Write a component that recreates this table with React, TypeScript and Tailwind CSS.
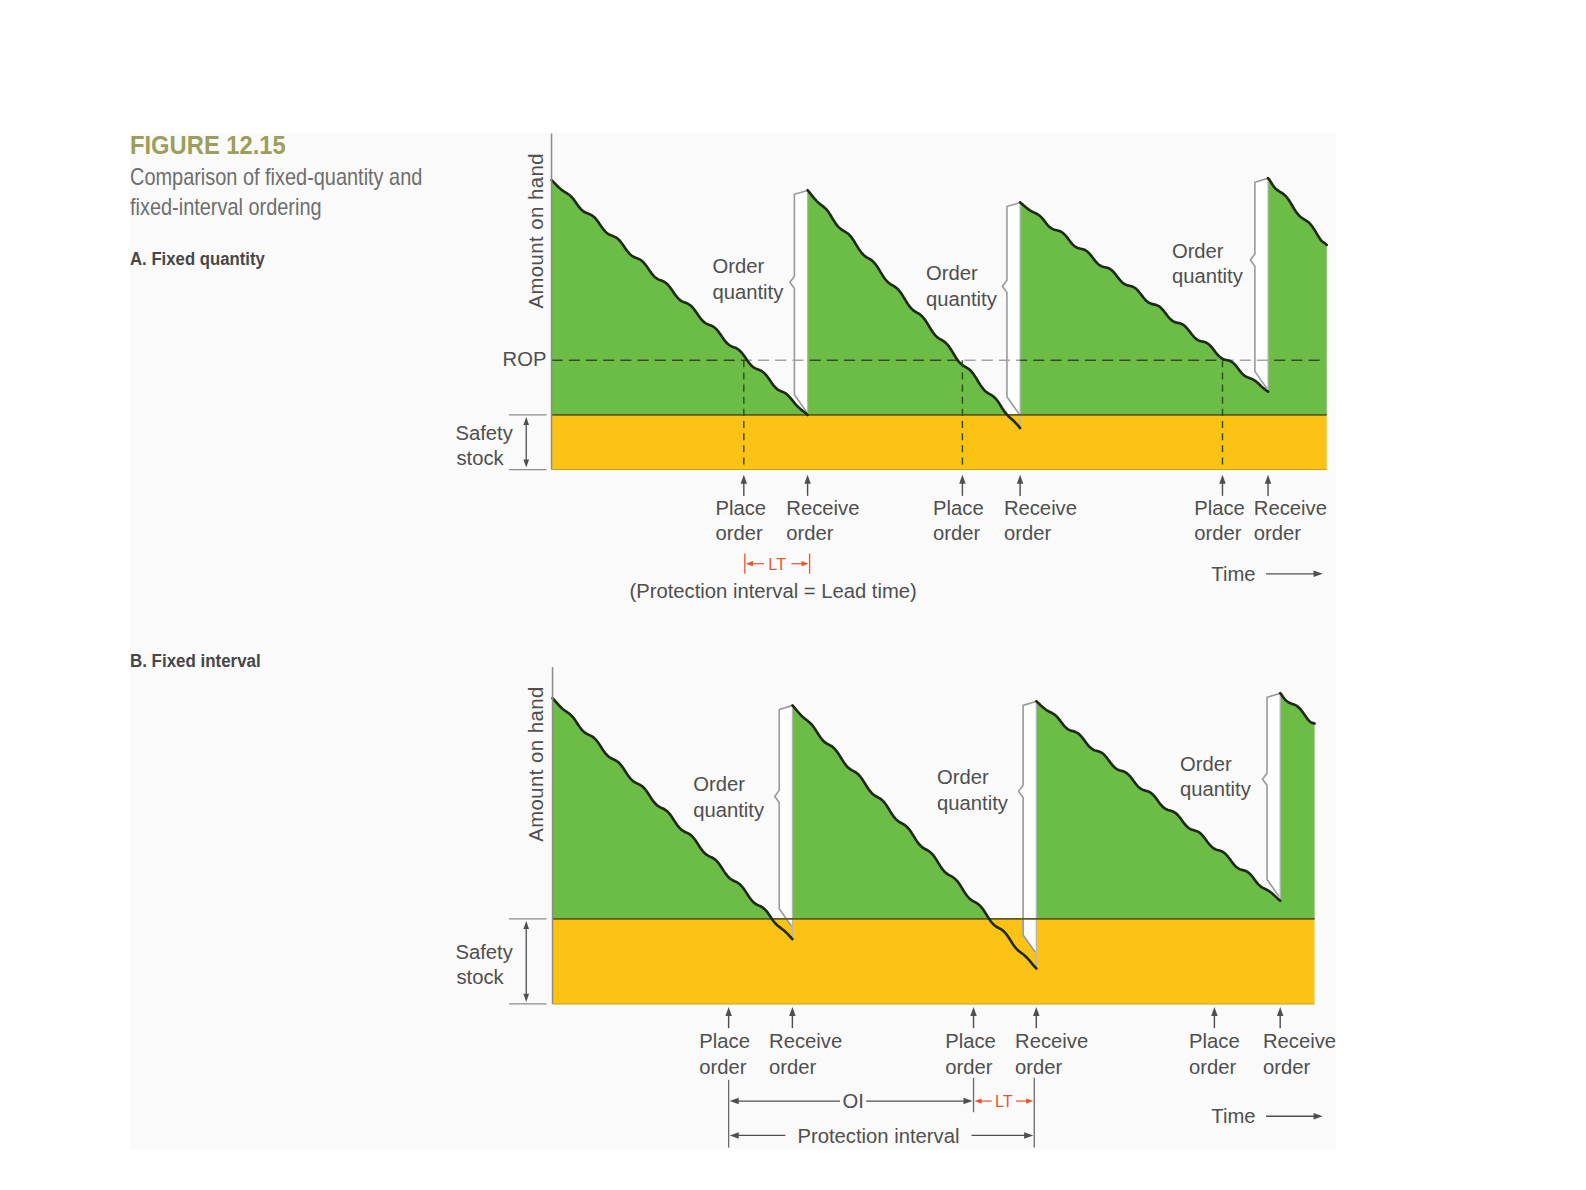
import React from 'react';

// the drawing is laid out in "figure units"; the viewBox maps them to page pixels
const K = 1.012;
const INK = '#4f4f4f';
const RED = '#e4572e';
const GREEN = '#6cbd45';
const YELLOW = '#fcc314';
const DARK = '#1e2a14';
const SANS = '"Liberation Sans", Arial, sans-serif';

type Seg = [number, number, number, number];
type Brk = { x: number; top: number; notch: number; bot: number; end: number };

function wave([x0, y0, x1, y1]: Seg) {
  const n = Math.max(4, Math.round(x1 - x0));
  const out: string[] = [];
  for (let i = 0; i <= n; i++) {
    const t = i / n;
    const x = x0 + (x1 - x0) * t;
    const fade = Math.min(1, t * 10, (1 - t) * 10);
    const y = y0 + (y1 - y0) * t + 2.1 * fade * Math.sin(((x - x0) / 24) * Math.PI * 2);
    out.push(`${x.toFixed(1)} ${y.toFixed(1)}`);
  }
  return out;
}

function head(x: number, y: number, dir: 'l' | 'r' | 'u' | 'd', len = 9, w = 3.2) {
  if (dir === 'u') return `M${x} ${y}L${x - w} ${y + len}L${x + w} ${y + len}Z`;
  if (dir === 'd') return `M${x} ${y}L${x - w} ${y - len}L${x + w} ${y - len}Z`;
  if (dir === 'l') return `M${x} ${y}L${x + len} ${y - w}L${x + len} ${y + w}Z`;
  return `M${x} ${y}L${x - len} ${y - w}L${x - len} ${y + w}Z`;
}

const UpArrow = ({ x, y0, y1 }: { x: number; y0: number; y1: number }) => (
  <g>
    <line x1={x} y1={y0 + 6} x2={x} y2={y1} stroke={INK} strokeWidth={1.4} />
    <path d={head(x, y0, 'u')} fill={INK} />
  </g>
);

const Label = ({ x, y, lines }: { x: number; y: number; lines: string[] }) => (
  <g>
    {lines.map((l, i) => (
      <text key={l + i} x={x} y={y + i * 25}>
        {l}
      </text>
    ))}
  </g>
);

interface ChartProps {
  id: string;
  pageTop: number;
  heightPx: number;
  axisX: number;
  axisTop: number;
  safety: number;
  base: number;
  right: number;
  cycles: Seg[];
  brackets: Brk[];
  amountY: number;
  safetyY: number;
  rop?: number;
  children?: React.ReactNode;
}

function Chart({ id, pageTop, heightPx, axisX, axisTop, safety, base, right, cycles, brackets, amountY, safetyY, rop, children }: ChartProps) {
  const pts = cycles.flatMap((c) => wave(c));
  const area = `M${axisX} ${safety}L${axisX} ${cycles[0][1]}L${pts.join('L')}L${right} ${safety}Z`;
  const vb = `${442 / K} ${pageTop / K} ${894 / K} ${heightPx / K}`;

  return (
    <svg viewBox={vb} className="w-[894px] shrink-0 overflow-visible" style={{ height: heightPx }}>
      <defs>
        <clipPath id={`${id}-top`}>
          <rect x={0} y={0} width={2000} height={safety} />
        </clipPath>
        <clipPath id={`${id}-area`}>
          <path d={area} />
        </clipPath>
      </defs>

      <rect x={axisX} y={safety} width={right - axisX} height={base - safety} fill={YELLOW} />
      <line x1={axisX} y1={base} x2={right} y2={base} stroke="#c9a20e" strokeWidth={1} />
      <path d={area} fill={GREEN} clipPath={`url(#${id}-top)`} />

      {brackets.map((b) => {
        const xl = b.x - 13;
        return (
          <g key={b.x}>
            <path d={`M${xl} ${b.top + 4}L${b.x} ${b.top}L${b.x} ${b.bot}L${xl} ${b.bot - 18}Z`} fill="#ffffff" />
            <line x1={b.x} y1={b.top} x2={b.x} y2={b.end} stroke="#b4b4b4" strokeWidth={1.2} />
            <path
              d={`M${b.x - 1} ${b.top + 0.5}L${xl} ${b.top + 4}L${xl} ${b.notch - 6}L${xl - 4.5} ${b.notch}L${xl} ${b.notch + 6}L${xl} ${b.bot - 18}L${b.x - 1} ${b.bot - 1}`}
              fill="none"
              stroke="#9a9a9a"
              strokeWidth={1.6}
              strokeLinejoin="round"
            />
          </g>
        );
      })}

      {rop !== undefined && (
        <g>
          <line x1={axisX} y1={rop} x2={right - 2} y2={rop} stroke="#a3a3a3" strokeWidth={1.4} strokeDasharray="11 6" />
          <line x1={axisX} y1={rop} x2={right - 2} y2={rop} stroke="#2f4d1f" strokeWidth={1.5} strokeDasharray="11 6" clipPath={`url(#${id}-area)`} />
        </g>
      )}

      <line x1={axisX} y1={safety} x2={right} y2={safety} stroke="#5a5b1e" strokeWidth={1.8} />

      {cycles.map((c, i) => (
        <path key={i} d={`M${wave(c).join('L')}`} fill="none" stroke={DARK} strokeWidth={2.6} strokeLinejoin="round" strokeLinecap="round" />
      ))}

      <line x1={axisX} y1={axisTop} x2={axisX} y2={base} stroke="#8c8c8c" strokeWidth={1.5} />

      {/* safety stock dimension */}
      <line x1={503} y1={safety} x2={540} y2={safety} stroke="#8c8c8c" strokeWidth={1.3} />
      <line x1={503} y1={base} x2={540} y2={base} stroke="#8c8c8c" strokeWidth={1.3} />
      <line x1={520} y1={safety + 6} x2={520} y2={base - 6} stroke={INK} strokeWidth={1.3} />
      <path d={head(520, safety + 2, 'u', 8, 2.8)} fill={INK} />
      <path d={head(520, base - 2, 'd', 8, 2.8)} fill={INK} />

      <g fontFamily={SANS} fontSize={20} fill={INK}>
        <text x={450} y={safetyY}>Safety</text>
        <text x={451} y={safetyY + 24}>stock</text>
        <text transform={`translate(537 ${amountY}) rotate(-90)`} textAnchor="middle" letterSpacing={0.5}>
          Amount on hand
        </text>
        {children}
      </g>
    </svg>
  );
}

const TimeArrow = ({ y }: { y: number }) => (
  <g>
    <text x={1197} y={y + 7}>Time</text>
    <line x1={1251} y1={y} x2={1300} y2={y} stroke={INK} strokeWidth={1.3} />
    <path d={head(1307, y, 'r')} fill={INK} />
  </g>
);

function FixedQuantity() {
  const place = [735, 951, 1208];
  const receive = [798, 1008, 1253];
  return (
    <Chart
      id="fq"
      pageTop={133}
      heightPx={484}
      axisX={545}
      axisTop={132}
      safety={410}
      base={464}
      right={1311}
      rop={356}
      amountY={228}
      safetyY={435}
      cycles={[
        [545, 178, 798, 410],
        [798, 188, 1008, 423],
        [1008, 200, 1253, 387],
        [1253, 176, 1311, 242],
      ]}
      brackets={[
        { x: 798, top: 188, notch: 279, bot: 408, end: 410 },
        { x: 1008, top: 200, notch: 283, bot: 410, end: 423 },
        { x: 1253, top: 176, notch: 257, bot: 385, end: 387 },
      ]}
    >
      {place.map((x) => (
        <line key={x} x1={x} y1={356} x2={x} y2={464} stroke="#2f4d1f" strokeWidth={1.4} strokeDasharray="7 5" />
      ))}
      {[...place, ...receive].map((x) => (
        <UpArrow key={x} x={x} y0={469} y1={490} />
      ))}

      <text x={540} y={362} textAnchor="end">ROP</text>

      <Label x={704} y={270} lines={['Order', 'quantity']} />
      <Label x={915} y={277} lines={['Order', 'quantity']} />
      <Label x={1158} y={255} lines={['Order', 'quantity']} />

      <Label x={707} y={509} lines={['Place', 'order']} />
      <Label x={777} y={509} lines={['Receive', 'order']} />
      <Label x={922} y={509} lines={['Place', 'order']} />
      <Label x={992} y={509} lines={['Receive', 'order']} />
      <Label x={1180} y={509} lines={['Place', 'order']} />
      <Label x={1239} y={509} lines={['Receive', 'order']} />

      {/* lead time */}
      <line x1={736} y1={547} x2={736} y2={567} stroke={RED} strokeWidth={1.3} />
      <line x1={800} y1={547} x2={800} y2={567} stroke={RED} strokeWidth={1.3} />
      <line x1={740} y1={557} x2={755} y2={557} stroke={RED} strokeWidth={1.2} />
      <line x1={782} y1={557} x2={796} y2={557} stroke={RED} strokeWidth={1.2} />
      <path d={head(737, 557, 'l', 7, 2.6)} fill={RED} />
      <path d={head(799, 557, 'r', 7, 2.6)} fill={RED} />
      <text x={768} y={563} textAnchor="middle" fontSize={16} fill={RED}>LT</text>

      <text x={622} y={591}>(Protection interval = Lead time)</text>
      <TimeArrow y={567} />
    </Chart>
  );
}

function FixedInterval() {
  const place = [720, 962, 1200];
  const receive = [783, 1024, 1265];
  return (
    <Chart
      id="fi"
      pageTop={617}
      heightPx={532}
      axisX={546}
      axisTop={659}
      safety={908}
      base={992}
      right={1299}
      amountY={755}
      safetyY={948}
      cycles={[
        [546, 690, 783, 928],
        [783, 697, 1024, 957],
        [1024, 693, 1265, 890],
        [1265, 685, 1299, 715],
      ]}
      brackets={[
        { x: 783, top: 697, notch: 787, bot: 916, end: 928 },
        { x: 1024, top: 693, notch: 782, bot: 942, end: 957 },
        { x: 1265, top: 685, notch: 770, bot: 887, end: 890 },
      ]}
    >
      {[...place, ...receive].map((x) => (
        <UpArrow key={x} x={x} y0={995} y1={1016} />
      ))}

      <Label x={685} y={782} lines={['Order', 'quantity']} />
      <Label x={926} y={775} lines={['Order', 'quantity']} />
      <Label x={1166} y={762} lines={['Order', 'quantity']} />

      <Label x={691} y={1036} lines={['Place', 'order']} />
      <Label x={760} y={1036} lines={['Receive', 'order']} />
      <Label x={934} y={1036} lines={['Place', 'order']} />
      <Label x={1003} y={1036} lines={['Receive', 'order']} />
      <Label x={1175} y={1036} lines={['Place', 'order']} />
      <Label x={1248} y={1036} lines={['Receive', 'order']} />

      {/* order interval, lead time, protection interval */}
      <line x1={720} y1={1067} x2={720} y2={1134} stroke="#6a6a6a" strokeWidth={1.3} />
      <line x1={962} y1={1065} x2={962} y2={1099} stroke="#6a6a6a" strokeWidth={1.3} />
      <line x1={1022} y1={1065} x2={1022} y2={1134} stroke="#6a6a6a" strokeWidth={1.3} />

      <line x1={726} y1={1088} x2={830} y2={1088} stroke={INK} strokeWidth={1.3} />
      <line x1={856} y1={1088} x2={955} y2={1088} stroke={INK} strokeWidth={1.3} />
      <path d={head(721, 1088, 'l')} fill={INK} />
      <path d={head(961, 1088, 'r')} fill={INK} />
      <text x={843} y={1095} textAnchor="middle">OI</text>

      <line x1={967} y1={1088} x2={980} y2={1088} stroke={RED} strokeWidth={1.2} />
      <line x1={1004} y1={1088} x2={1017} y2={1088} stroke={RED} strokeWidth={1.2} />
      <path d={head(963, 1088, 'l', 7, 2.6)} fill={RED} />
      <path d={head(1021, 1088, 'r', 7, 2.6)} fill={RED} />
      <text x={992} y={1094} textAnchor="middle" fontSize={16} fill={RED}>LT</text>

      <line x1={726} y1={1122} x2={776} y2={1122} stroke={INK} strokeWidth={1.3} />
      <line x1={960} y1={1122} x2={1015} y2={1122} stroke={INK} strokeWidth={1.3} />
      <path d={head(721, 1122, 'l')} fill={INK} />
      <path d={head(1021, 1122, 'r')} fill={INK} />
      <text x={868} y={1129} textAnchor="middle">Protection interval</text>

      <TimeArrow y={1103} />
    </Chart>
  );
}

export default function App() {
  return (
    <div className="min-h-screen bg-white pt-[133px] pl-[130px] font-['Liberation_Sans',Arial,sans-serif]">
      <div className="w-[1206px] h-[1016px] bg-[#fafafa] flex flex-col">
        <section className="flex h-[484px]">
          <div className="w-[312px] shrink-0">
            <div className="-mt-[2px] text-[25px] leading-[28px] font-bold text-[#9c9e5b] whitespace-nowrap origin-left scale-x-[0.95]">
              FIGURE 12.15
            </div>
            <div className="mt-[3px] text-[24px] leading-[30px] text-[#6e6e6e] whitespace-nowrap origin-left scale-x-[0.83]">
              <div>Comparison of fixed-quantity and</div>
              <div>fixed-interval ordering</div>
            </div>
            <div className="mt-[25px] text-[18px] leading-6 font-bold text-[#474747] whitespace-nowrap origin-left scale-x-[0.93]">
              A. Fixed quantity
            </div>
          </div>
          <FixedQuantity />
        </section>

        <section className="flex h-[532px]">
          <div className="w-[312px] shrink-0 pt-[32px]">
            <div className="text-[18px] leading-6 font-bold text-[#474747] whitespace-nowrap origin-left scale-x-[0.94]">
              B. Fixed interval
            </div>
          </div>
          <FixedInterval />
        </section>
      </div>
    </div>
  );
}
